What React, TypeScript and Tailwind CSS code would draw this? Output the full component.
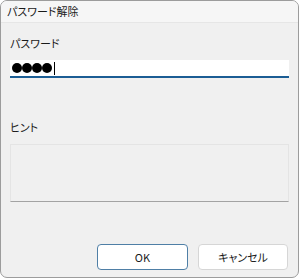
import React from "react";

const jp = "font-['Noto_Sans_CJK_JP','Noto_Sans',sans-serif] [font-feature-settings:'palt']";

export default function App() {
  return (
    <div className="w-[300px] h-[279px] bg-white">
      <div className="w-[299px] h-[278px] flex flex-col border border-[#9c9c9c] rounded-[7px] overflow-hidden bg-[#f0f0f0]">
        {/* title bar */}
        <div className={`h-[22px] shrink-0 flex items-center pl-[6px] bg-[#f6f6f6] border-b border-[#e6e6e6] text-[11px] text-[#1a1a1a] ${jp}`}>
          パスワード解除
        </div>

        {/* body */}
        <div className="flex-1 flex flex-col px-[9px]">
          <div className={`mt-[13px] h-[14px] leading-[14px] text-[11px] text-[#1a1a1a] ${jp}`}>パスワード</div>

          <div className="mt-[10px] h-[18px] bg-white border-b-2 border-[#1b5d94] flex items-center pl-[2px]">
            {[0, 1, 2, 3].map((i) => (
              <span key={i} className="w-[10px] h-[10px] rounded-full bg-black" />
            ))}
            <span className="ml-[2px] w-px h-[13px] bg-black" />
          </div>

          <div className={`mt-[42px] h-[14px] leading-[14px] text-[11px] text-[#1a1a1a] ${jp}`}>ヒント</div>

          <div className="mt-[10px] h-[58px] border border-[#e4e4e4] border-b-[#a3a3a3] bg-[#f0f0f0]" />

          <div className="mt-auto mb-[7px] flex justify-end gap-[10px] pr-[1px]">
            <button className={`w-[91px] h-[26px] rounded-[4px] bg-white border-[1.5px] border-[#4f7fa6] text-[11px] text-[#1a1a1a] ${jp}`}>
              OK
            </button>
            <button className={`w-[90px] h-[26px] rounded-[4px] bg-white border border-[#d6d6d6] text-[11px] text-[#1a1a1a] ${jp}`}>
              キャンセル
            </button>
          </div>
        </div>
      </div>
    </div>
  );
}
